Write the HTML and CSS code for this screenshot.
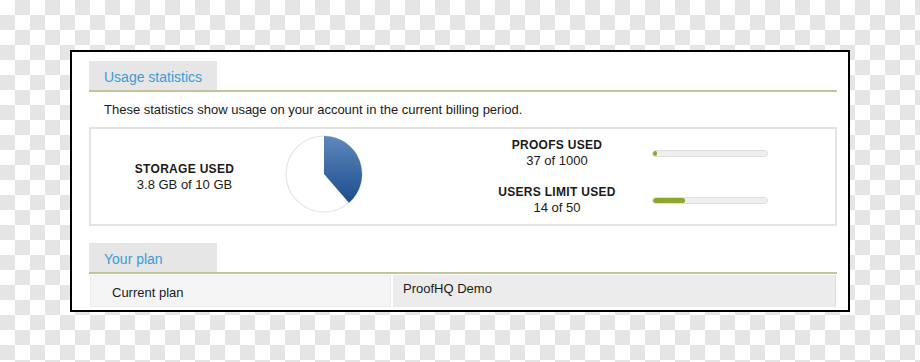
FILE: index.html
```html
<!DOCTYPE html>
<html lang="en">
<head>
<meta charset="utf-8">
<title>Usage statistics</title>
<link rel="stylesheet" href="styles.css">
</head>
<body>
<div class="frame">
  <section class="section">
    <div class="section-head"><h2 class="tab">Usage statistics</h2></div>
    <p class="desc">These statistics show usage on your account in the current billing period.</p>
    <div class="stats">
      <div class="storage">
        <div class="label">STORAGE USED</div>
        <div class="value">3.8 GB of 10 GB</div>
      </div>
      <svg class="pie" width="80" height="80" viewBox="0 0 80 80">
        <defs>
          <linearGradient id="pieGrad" x1="0" y1="0" x2="0" y2="1">
            <stop offset="0" stop-color="#5f88bc"/>
            <stop offset="1" stop-color="#1c4d8d"/>
          </linearGradient>
        </defs>
        <circle cx="40" cy="40" r="38" fill="#fff" stroke="#e4e4e4" stroke-width="1.2"/>
        <path d="M40 40 L40 2 A38 38 0 0 1 64.9 68.7 Z" fill="url(#pieGrad)"/>
      </svg>
      <div class="quotas">
        <div class="quota">
          <div class="quota-text">
            <div class="label">PROOFS USED</div>
            <div class="value">37 of 1000</div>
          </div>
          <div class="bar"><div class="fill" style="width:4px"></div></div>
        </div>
        <div class="quota">
          <div class="quota-text">
            <div class="label">USERS LIMIT USED</div>
            <div class="value">14 of 50</div>
          </div>
          <div class="bar"><div class="fill" style="width:32px"></div></div>
        </div>
      </div>
    </div>
  </section>
  <section class="section plan">
    <div class="section-head"><h2 class="tab">Your plan</h2></div>
    <div class="plan-row">
      <div class="cell cell-key">Current plan</div>
      <div class="cell cell-val">ProofHQ Demo</div>
    </div>
  </section>
</div>
</body>
</html>
```

FILE: styles.css
```css
html, body {
  margin: 0;
  padding: 0;
}
body {
  width: 920px;
  height: 362px;
  overflow: hidden;
  background-color: #fff;
  background-image: conic-gradient(#e5e5e5 0 25%, #fff 0 50%, #e5e5e5 0 75%, #fff 0);
  background-size: 30px 30px;
  font-family: "Liberation Sans", Arial, sans-serif;
  color: #1a1a1a;
  padding: 50px 0 0 70px;
  box-sizing: border-box;
}
.frame {
  width: 780px;
  height: 262px;
  box-sizing: border-box;
  border: 2px solid #000;
  background: #fff;
  overflow: hidden;
  padding: 9px 11px 0 17px;
}
.section-head {
  border-bottom: 2px solid #c3c49b;
}
.tab {
  margin: 0;
  width: 128px;
  box-sizing: border-box;
  height: 29px;
  padding: 3px 0 0 15px;
  line-height: 26px;
  background: #e6e6e6;
  color: #3b9bd8;
  font-size: 14px;
  font-weight: normal;
}
.desc {
  margin: 10px 0 9px 15px;
  font-size: 13px;
  line-height: 16px;
  color: #1a1a1a;
}
.stats {
  height: 99px;
  box-sizing: border-box;
  border: 2px solid #e3e3e3;
  display: flex;
  align-items: center;
}
.label {
  font-size: 12px;
  font-weight: bold;
  letter-spacing: 0.3px;
  color: #1a1a1a;
}
.value {
  font-size: 13px;
}
.storage {
  width: 187px;
  text-align: center;
  line-height: 16px;
}
.pie {
  margin-left: 6px;
  margin-bottom: 5px;
  flex: none;
}
.quotas {
  margin-left: 103px;
  display: flex;
  flex-direction: column;
  gap: 16px;
}
.quota {
  display: flex;
  align-items: center;
}
.quota-text {
  width: 180px;
  text-align: center;
  line-height: 15.5px;
}
.bar {
  margin-left: 5px;
  width: 116px;
  height: 7px;
  box-sizing: border-box;
  border: 1px solid #dedede;
  border-radius: 4px;
  background: #efefef;
  overflow: hidden;
}
.fill {
  height: 100%;
  background: #8ca72b;
  border-radius: 3px;
}
.plan {
  margin-top: 17px;
}
.plan-row {
  display: grid;
  grid-template-columns: 301px 1fr;
  gap: 2px;
  margin: 1px 1px 0 1px;
  height: 32px;
}
.cell {
  font-size: 13px;
  box-sizing: border-box;
}
.cell-key {
  background: #f5f5f5;
  border: 1px solid #ececec;
  padding: 9px 0 0 21px;
  line-height: 16px;
}
.cell-val {
  background: #ececec;
  border-right: 1px solid #dcdcdc;
  padding: 6px 0 0 10px;
  line-height: 16px;
}
```
